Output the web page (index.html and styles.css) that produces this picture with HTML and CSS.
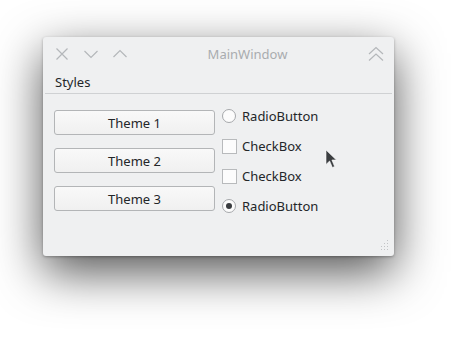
FILE: index.html
```html
<!DOCTYPE html>
<html lang="en">
<head>
    <meta charset="UTF-8">
    <title>MainWindow</title>
    <link rel="stylesheet" href="styles.css">
</head>
<body>
    <div class="window">
        <div class="titlebar">
            <div class="buttons">
                <svg class="tb-icon" viewBox="0 0 14 14" width="14" height="14">
                    <path d="M1.5 1.5 L12.5 12.5 M12.5 1.5 L1.5 12.5"/>
                </svg>
                <svg class="tb-icon" viewBox="0 0 14 14" width="14" height="14">
                    <path d="M0.5 4 L7 10.5 L13.5 4"/>
                </svg>
                <svg class="tb-icon" viewBox="0 0 14 14" width="14" height="14">
                    <path d="M0.5 10 L7 3.5 L13.5 10"/>
                </svg>
            </div>
            <div class="title">MainWindow</div>
            <svg class="tb-icon shade" viewBox="0 0 16 16" width="16" height="16">
                <path d="M1 8 L8 1.5 L15 8 M1 14.5 L8 8 L15 14.5"/>
            </svg>
        </div>
        <div class="menubar">
            <span class="menu">Styles</span>
        </div>
        <div class="content">
            <div class="themes">
                <button class="push">Theme 1</button>
                <button class="push">Theme 2</button>
                <button class="push">Theme 3</button>
            </div>
            <div class="options">
                <label class="opt"><span class="radio"></span>RadioButton</label>
                <label class="opt"><span class="check"></span>CheckBox</label>
                <label class="opt"><span class="check"></span>CheckBox</label>
                <label class="opt"><span class="radio on"></span>RadioButton</label>
            </div>
        </div>
        <svg class="cursor" viewBox="0 0 12 20" width="12" height="20">
            <path d="M1 1 L1 15.5 L4.6 12 L7.4 18.5 L9.6 17.5 L6.9 11 L11.4 11 Z"/>
        </svg>
        <svg class="grip" viewBox="0 0 10 10" width="10" height="10">
            <rect x="8" y="0" width="1" height="1"/>
            <rect x="5" y="3" width="1" height="1"/><rect x="8" y="3" width="1" height="1"/>
            <rect x="2" y="6" width="1" height="1"/><rect x="5" y="6" width="1" height="1"/><rect x="8" y="6" width="1" height="1"/>
            <rect x="-1" y="9" width="1" height="1"/><rect x="2" y="9" width="1" height="1"/><rect x="5" y="9" width="1" height="1"/><rect x="8" y="9" width="1" height="1"/>
        </svg>
    </div>
</body>
</html>
```

FILE: styles.css
```css
html {
    height: 100%;
}

body {
    margin: 0;
    min-height: 100%;
    box-sizing: border-box;
    padding: 37px 0 0 43px;
    background-color: #ffffff;
    font-family: "Noto Sans", "Open Sans", sans-serif;
    font-size: 13px;
    color: #232629;
}

.window {
    position: relative;
    width: 351px;
    height: 219px;
    background-color: #eff0f1;
    border-radius: 3px;
    box-shadow: 0 16px 48px rgba(0, 0, 0, 0.68), 0 1px 3px rgba(0, 0, 0, 0.3);
}

.titlebar {
    height: 34px;
    display: flex;
    align-items: center;
    padding: 0 10px 0 12px;
}

.buttons {
    display: flex;
    gap: 15px;
    align-items: center;
}

.tb-icon {
    fill: none;
    stroke: #b4b7ba;
    stroke-width: 1.2;
}

.title {
    flex: 1;
    text-align: center;
    color: #a9acaf;
}

.menubar {
    height: 22px;
    margin: 0 2px;
    padding-left: 10px;
    border-bottom: 1px solid #cfd1d3;
    display: flex;
    align-items: center;
}

.content {
    display: flex;
    gap: 7px;
    padding: 0 11px;
}

.themes {
    display: flex;
    flex-direction: column;
    gap: 13px;
    padding-top: 16px;
}

.push {
    width: 161px;
    height: 25px;
    font-family: inherit;
    font-size: 13px;
    color: #232629;
    background: linear-gradient(#f9f9f9, #f0f0f0);
    border: 1px solid #b3b5b7;
    border-radius: 3px;
    padding: 0;
}

.options {
    display: flex;
    flex-direction: column;
    padding-top: 7px;
}

.opt {
    height: 30px;
    display: flex;
    align-items: center;
}

.radio {
    width: 12px;
    height: 12px;
    border: 1px solid #a6a8ab;
    border-radius: 50%;
    background-color: #fcfcfc;
    margin-right: 6px;
    position: relative;
}

.radio.on::after {
    content: "";
    position: absolute;
    left: 3px;
    top: 3px;
    width: 6px;
    height: 6px;
    border-radius: 50%;
    background-color: #3a3d40;
}

.check {
    width: 13px;
    height: 13px;
    border: 1px solid #b8babc;
    background-color: #fcfcfc;
    margin-right: 5px;
}

.cursor {
    position: absolute;
    left: 282px;
    top: 112px;
    fill: #3b3e41;
    stroke: #ffffff;
    stroke-width: 0.6;
}

.grip {
    position: absolute;
    right: 5px;
    bottom: 6px;
    fill: #c2c4c6;
}
```
